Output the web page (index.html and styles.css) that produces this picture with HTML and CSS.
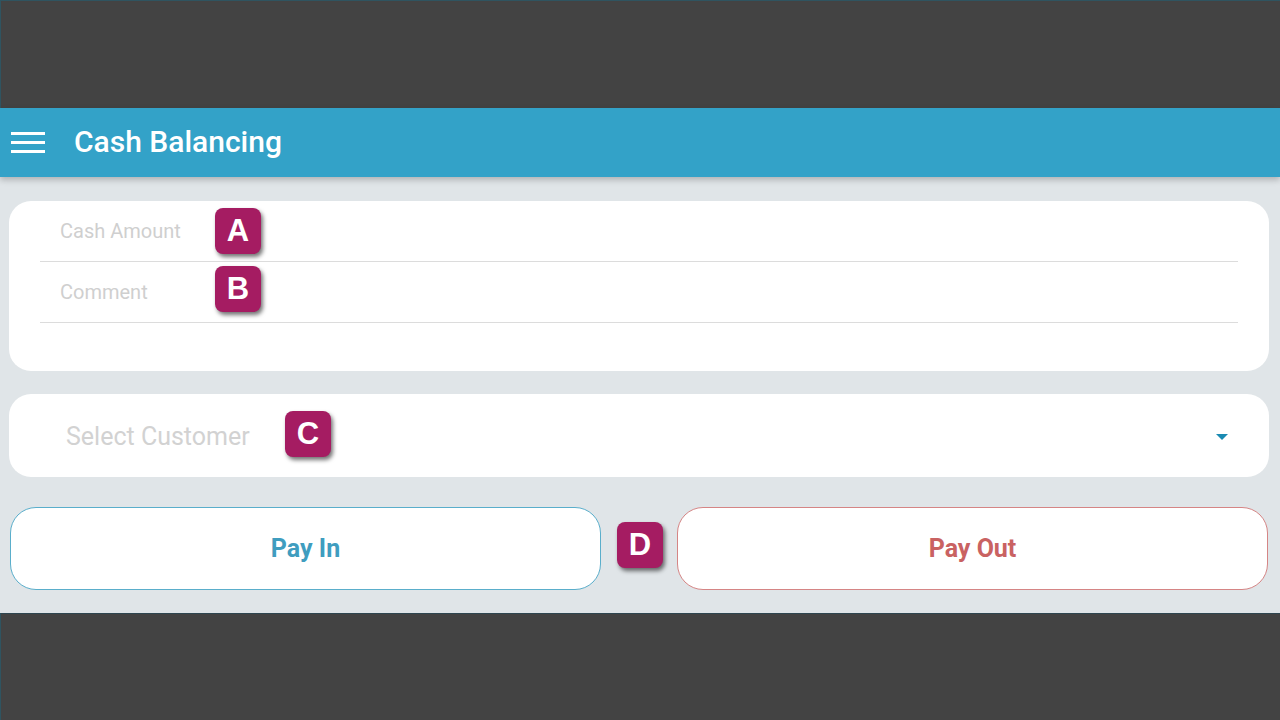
FILE: index.html
```html
<!DOCTYPE html>
<html lang="en">
<head>
<meta charset="utf-8">
<title>Cash Balancing</title>
<link rel="stylesheet" href="styles.css">
</head>
<body>
<div class="screen">
  <div class="dark dark-top"></div>
  <header class="appbar">
    <svg class="menu" width="34" height="24" viewBox="0 0 34 24"><rect x="0" y="2" width="34" height="3" fill="#fff"/><rect x="0" y="11" width="34" height="3" fill="#fff"/><rect x="0" y="20" width="34" height="3" fill="#fff"/></svg>
    <h1 class="title">Cash Balancing</h1>
  </header>
  <main class="content">
    <section class="card form-card">
      <div class="field"><span class="label">Cash Amount</span><span class="badge badge-a">A</span></div>
      <div class="field"><span class="label">Comment</span><span class="badge badge-b">B</span></div>
    </section>
    <section class="card select-card">
      <span class="select-text">Select Customer</span>
      <span class="badge badge-c">C</span>
      <svg class="caret" width="12" height="6" viewBox="0 0 12 6"><path d="M0 0 L12 0 L6 6 Z" fill="#1a8ab2"/></svg>
    </section>
    <div class="buttons">
      <button class="btn btn-in">Pay In</button>
      <button class="btn btn-out">Pay Out</button>
      <span class="badge badge-d">D</span>
    </div>
  </main>
  <div class="dark dark-bottom"></div>
</div>
</body>
</html>
```
FILE: styles.css
```css
html, body {
  margin: 0;
  padding: 0;
}
body {
  font-family: Roboto, "Liberation Sans", sans-serif;
  background: #444444;
}
.screen {
  width: 1280px;
  height: 720px;
  display: flex;
  flex-direction: column;
  overflow: hidden;
}
.dark {
  background: #434343;
  box-sizing: border-box;
}
.dark-top {
  height: 108px;
  border-left: 1px solid #2f5460;
  border-top: 1px solid #2f5460;
}
.dark-bottom {
  height: 107px;
  border-left: 1px solid #2f5460;
  border-top: 1px solid #2f4650;
}
.appbar {
  height: 69px;
  background: #33a2c8;
  display: flex;
  align-items: center;
  padding-left: 11px;
  box-shadow: 0 3px 6px rgba(0,0,0,0.22);
  position: relative;
  z-index: 2;
}
.menu {
  margin-top: -2px;
}
.title {
  margin: -3px 0 0 29px;
  color: #fff;
  font-size: 30px;
  font-weight: 500;
  letter-spacing: 0;
}
.content {
  height: 436px;
  background: #e0e5e8;
  padding: 24px 11px 0 9px;
  box-sizing: border-box;
  display: flex;
  flex-direction: column;
}
.card {
  background: #fff;
  border-radius: 22px;
}
.form-card {
  height: 170px;
  padding: 0 31px;
  box-sizing: border-box;
}
.field {
  height: 60px;
  border-bottom: 1px solid #dcdcdc;
  display: flex;
  align-items: center;
  padding-left: 20px;
  position: relative;
}
.label {
  font-size: 20px;
  color: #cfcfcf;
}
.badge {
  position: absolute;
  width: 46px;
  height: 46px;
  border-radius: 8px;
  background: #a51c62;
  color: #fff;
  font-family: "Liberation Sans", Arial, sans-serif;
  font-weight: bold;
  font-size: 31px;
  display: flex;
  align-items: center;
  justify-content: center;
  box-shadow: 2px 3px 4px rgba(0,0,0,0.55);
}
.badge-a { left: 175px; top: 7px; }
.badge-b { left: 175px; top: 4px; }
.select-card {
  margin-top: 23px;
  height: 83px;
  display: flex;
  align-items: center;
  padding: 0 41px 0 57px;
  position: relative;
}
.select-text {
  font-size: 25px;
  color: #d2d2d2;
  flex: 1;
  margin-top: 1px;
}
.badge-c { left: 276px; top: 17px; }
.caret {
  margin-top: 2px;
}
.buttons {
  margin-top: 30px;
  display: grid;
  grid-template-columns: 591px 591px;
  column-gap: 76px;
  padding-left: 1px;
  position: relative;
}
.btn {
  height: 83px;
  background: #fff;
  border-radius: 26px;
  font-family: Roboto, "Liberation Sans", sans-serif;
  font-weight: bold;
  font-size: 25px;
  cursor: pointer;
}
.btn-in {
  border: 1.5px solid #5aaecb;
  color: #3f9dbf;
}
.btn-out {
  border: 1.5px solid #d58585;
  color: #c96262;
}
.badge-d { left: 608px; top: 15px; }
```
